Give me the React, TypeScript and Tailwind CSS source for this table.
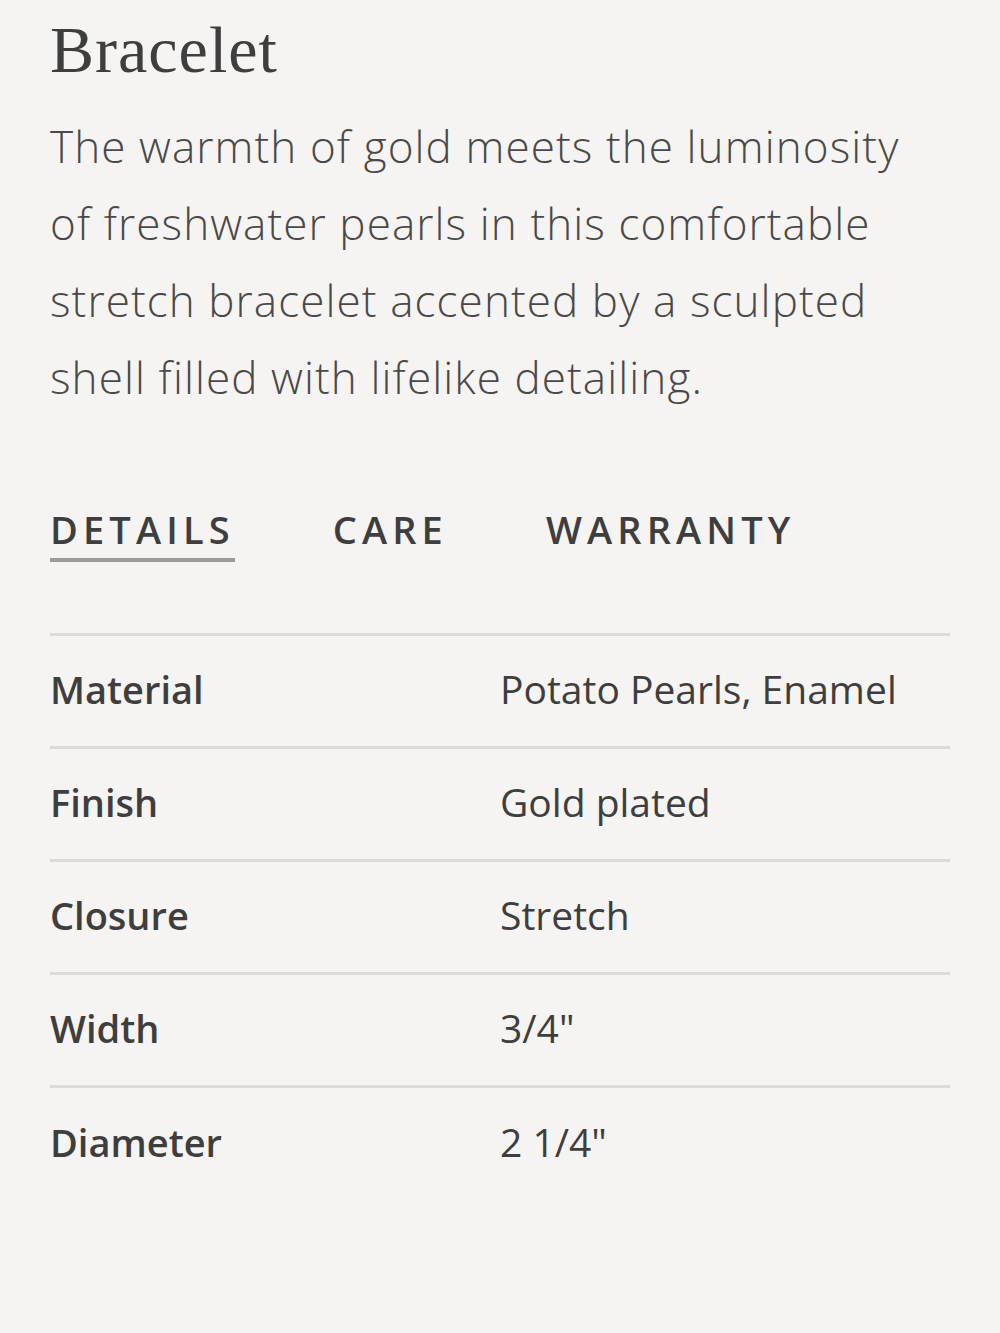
export default function App() {
  const rows = [
    { label: "Material", value: "Potato Pearls, Enamel" },
    { label: "Finish", value: "Gold plated" },
    { label: "Closure", value: "Stretch" },
    { label: "Width", value: '3/4"' },
    { label: "Diameter", value: '2 1/4"' },
  ];

  return (
    <div className="min-h-[1333px] w-[1000px] bg-[#f5f4f2] text-[#3f3e3e] px-[50px] pt-[12px] font-['Open_Sans',sans-serif]">
      {/* title + copy */}
      <h1 className="font-['Liberation_Serif',serif] text-[66px] leading-[76px] tracking-[1px]">Bracelet</h1>
      <p className="mt-[20px] w-[890px] text-[44px] leading-[77px] font-light tracking-[1.1px] text-[#4a4948]">
        The warmth of gold meets the luminosity of freshwater pearls in this comfortable stretch bracelet accented by a sculpted shell filled with lifelike detailing.
      </p>

      {/* tabs */}
      <div className="mt-[94px] flex text-[38px] font-semibold tracking-[0.135em] leading-none">
        <div className="border-b-4 border-[#9b9b9b] pb-[10px]">DETAILS</div>
        <div className="ml-[98px]">CARE</div>
        <div className="ml-[98px]">WARRANTY</div>
      </div>

      {/* details table */}
      <div className="mt-[71px] border-t-[3px] border-[#dcdbd9]">
        {rows.map((r, i) => (
          <div
            key={r.label}
            className={`flex items-center h-[113px] pb-[4px] text-[38px] ${i < rows.length - 1 ? "border-b-[3px] border-[#dcdbd9]" : ""}`}
          >
            <div className="w-[450px] font-semibold">{r.label}</div>
            <div className="text-[39px]">{r.value}</div>
          </div>
        ))}
      </div>
    </div>
  );
}
